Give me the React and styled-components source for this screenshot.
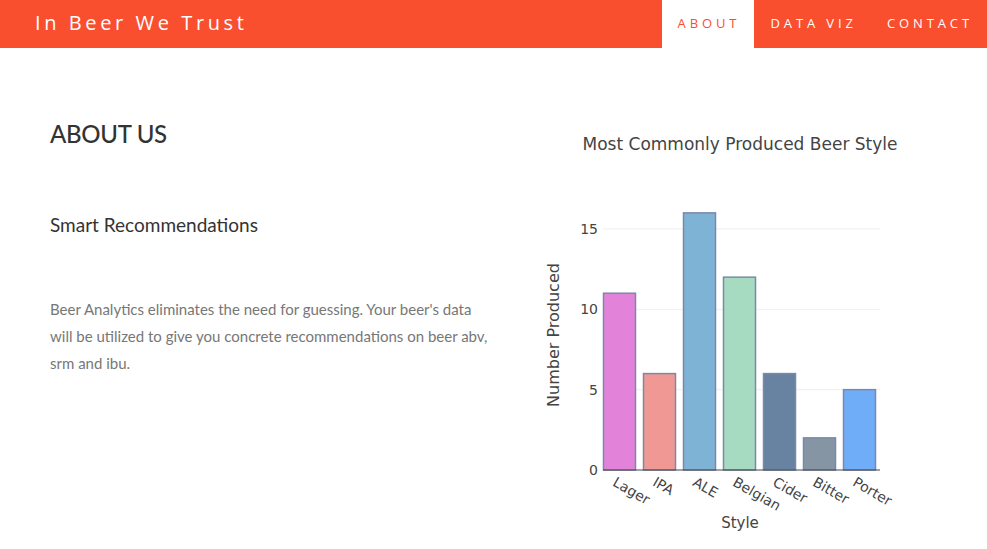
import React from "react";
import styled, { createGlobalStyle } from "styled-components";

const GlobalStyle = createGlobalStyle`
  * { box-sizing: border-box; }
  body {
    margin: 0;
    background: #fff;
    font-family: Lato, "Open Sans", sans-serif;
  }
`;

const beers = [
  { name: "Lager", count: 11, fill: "#e282d9" },
  { name: "IPA", count: 6, fill: "#f09994" },
  { name: "ALE", count: 16, fill: "#7fb3d5" },
  { name: "Belgian", count: 12, fill: "#a6dbc2" },
  { name: "Cider", count: 6, fill: "#6783a1" },
  { name: "Bitter", count: 2, fill: "#8595a3" },
  { name: "Porter", count: 5, fill: "#70adf9" },
];

const plot = { left: 600, right: 880, zero: 470, unit: 16.07, band: 40 };
const yOf = (v) => plot.zero - v * plot.unit;

const Chart = () => (
  <ChartSvg width="400" height="430" viewBox="530 110 400 430">
    <text className="title" x="740" y="150" textAnchor="middle">
      Most Commonly Produced Beer Style
    </text>
    {[5, 10, 15].map((v) => (
      <line key={v} x1={plot.left + 3} x2={plot.right} y1={yOf(v)} y2={yOf(v)} stroke="#eee" />
    ))}
    {[0, 5, 10, 15].map((v) => (
      <text key={v} className="tick" x="598" y={yOf(v) + 5} textAnchor="end">
        {v}
      </text>
    ))}
    {beers.map((b, i) => {
      const x = plot.left + i * plot.band + 3.5;
      const top = yOf(b.count);
      return (
        <rect
          key={b.name}
          x={x}
          y={top}
          width="32"
          height={plot.zero - top}
          fill={b.fill}
          stroke="#7b89a8"
          strokeWidth="1.5"
        />
      );
    })}
    <line x1={plot.left + 3} x2={plot.right} y1={plot.zero} y2={plot.zero} stroke="#444" strokeWidth="1" />
    {beers.map((b, i) => {
      const cx = plot.left + i * plot.band + 20 - 3;
      return (
        <text
          key={b.name}
          className="tick"
          x={cx}
          y="476"
          dominantBaseline="hanging"
          transform={`rotate(30 ${cx} 476)`}
        >
          {b.name}
        </text>
      );
    })}
    <text className="axis" x="740" y="528" textAnchor="middle">Style</text>
    <text className="axis big" x="559" y="335" textAnchor="middle" transform="rotate(-90 559 335)">
      Number Produced
    </text>
  </ChartSvg>
);

export default function App() {
  return (
    <>
      <GlobalStyle />
      <NavBar>
        <Brand>In Beer We Trust</Brand>
        <NavLinks>
          <NavItem $active>About</NavItem>
          <NavItem>Data Viz</NavItem>
          <NavItem>Contact</NavItem>
        </NavLinks>
      </NavBar>
      <Main>
        <TextColumn>
          <Heading>ABOUT US</Heading>
          <SubHeading>Smart Recommendations</SubHeading>
          <Paragraph>
            Beer Analytics eliminates the need for guessing. Your beer's data will be
            utilized to give you concrete recommendations on beer abv, srm and ibu.
          </Paragraph>
        </TextColumn>
        <Chart />
      </Main>
    </>
  );
}

const NavBar = styled.header`
  display: flex;
  align-items: stretch;
  height: 48px;
  background: #fa4f2f;
`;

const Brand = styled.div`
  display: flex;
  align-items: center;
  padding: 0 0 3px 35px;
  font-family: "Open Sans", sans-serif;
  font-size: 20px;
  letter-spacing: 3.6px;
  color: #fff;
`;

const NavLinks = styled.nav`
  display: flex;
  margin-left: auto;
`;

const NavItem = styled.div`
  display: flex;
  align-items: center;
  padding: 0 14px 3px 16px;
  font-family: "Open Sans", sans-serif;
  font-size: 13px;
  letter-spacing: 3.9px;
  text-transform: uppercase;
  color: ${(p) => (p.$active ? "#fa4f2f" : "#fff")};
  background: ${(p) => (p.$active ? "#fff" : "transparent")};
`;

const Main = styled.main`
  display: flex;
  padding: 62px 0 0 50px;
`;

const TextColumn = styled.section`
  width: 440px;
  margin-right: 40px;
`;

const Heading = styled.h1`
  margin: 12px 0 0;
  font-size: 24px;
  line-height: 24px;
  font-weight: 500;
  letter-spacing: -0.3px;
  color: #333;
`;

const SubHeading = styled.h3`
  margin: 69px 0 0;
  font-size: 19px;
  line-height: 20px;
  font-weight: 400;
  color: #333;
`;

const Paragraph = styled.p`
  margin: 61px 0 0;
  font-size: 15px;
  line-height: 27px;
  color: #777;
`;

const ChartSvg = styled.svg`
  display: block;
  font-family: "DejaVu Sans", Verdana, sans-serif;
  .title {
    font-size: 17px;
    fill: #444;
  }
  .tick {
    font-size: 14px;
    fill: #444;
  }
  .axis {
    font-size: 15px;
    fill: #444;
  }
  .big {
    font-size: 16px;
  }
`;
